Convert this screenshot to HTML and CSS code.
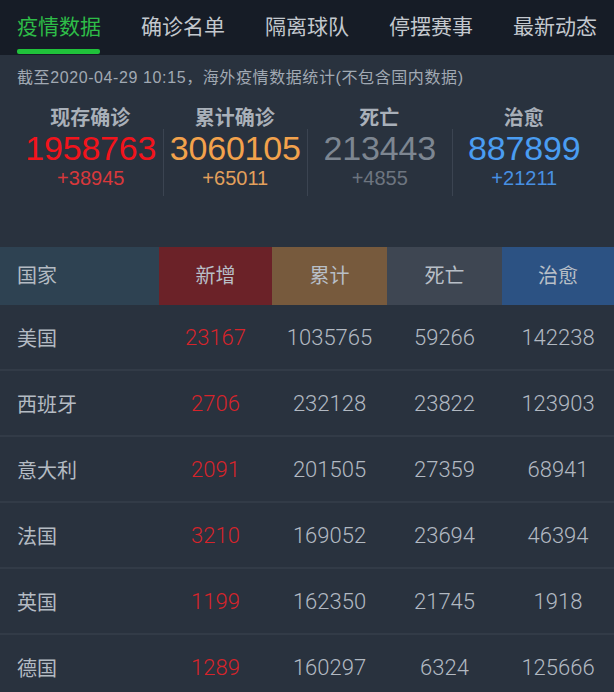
FILE: index.html
```html
<!DOCTYPE html>
<html lang="zh-CN">
<head>
<meta charset="utf-8">
<title>疫情数据</title>
<link rel="stylesheet" href="styles.css">
</head>
<body>
<div class="page">
  <nav class="tabs">
    <div class="tab active">疫情数据</div>
    <div class="tab">确诊名单</div>
    <div class="tab">隔离球队</div>
    <div class="tab">停摆赛事</div>
    <div class="tab">最新动态</div>
  </nav>
  <main class="content">
    <p class="note">截至2020-04-29 10:15，海外疫情数据统计(不包含国内数据)</p>
    <section class="stats">
      <div class="stat">
        <div class="label">现存确诊</div>
        <div class="body first">
          <div class="big red">1958763</div>
          <div class="sub red-sub">+38945</div>
        </div>
      </div>
      <div class="stat">
        <div class="label">累计确诊</div>
        <div class="body">
          <div class="big orange">3060105</div>
          <div class="sub orange-sub">+65011</div>
        </div>
      </div>
      <div class="stat">
        <div class="label">死亡</div>
        <div class="body">
          <div class="big gray">213443</div>
          <div class="sub gray-sub">+4855</div>
        </div>
      </div>
      <div class="stat">
        <div class="label">治愈</div>
        <div class="body">
          <div class="big blue">887899</div>
          <div class="sub blue-sub">+21211</div>
        </div>
      </div>
    </section>
    <section class="table">
      <div class="row head">
        <div class="cell name h-country">国家</div>
        <div class="cell h-new">新增</div>
        <div class="cell h-total">累计</div>
        <div class="cell h-dead">死亡</div>
        <div class="cell h-cured">治愈</div>
      </div>
      <div class="row">
        <div class="cell name">美国</div>
        <div class="cell num new">23167</div>
        <div class="cell num">1035765</div>
        <div class="cell num">59266</div>
        <div class="cell num">142238</div>
      </div>
      <div class="row">
        <div class="cell name">西班牙</div>
        <div class="cell num new">2706</div>
        <div class="cell num">232128</div>
        <div class="cell num">23822</div>
        <div class="cell num">123903</div>
      </div>
      <div class="row">
        <div class="cell name">意大利</div>
        <div class="cell num new">2091</div>
        <div class="cell num">201505</div>
        <div class="cell num">27359</div>
        <div class="cell num">68941</div>
      </div>
      <div class="row">
        <div class="cell name">法国</div>
        <div class="cell num new">3210</div>
        <div class="cell num">169052</div>
        <div class="cell num">23694</div>
        <div class="cell num">46394</div>
      </div>
      <div class="row">
        <div class="cell name">英国</div>
        <div class="cell num new">1199</div>
        <div class="cell num">162350</div>
        <div class="cell num">21745</div>
        <div class="cell num">1918</div>
      </div>
      <div class="row">
        <div class="cell name">德国</div>
        <div class="cell num new">1289</div>
        <div class="cell num">160297</div>
        <div class="cell num">6324</div>
        <div class="cell num">125666</div>
      </div>
    </section>
  </main>
</div>
</body>
</html>
```

FILE: styles.css
```css
* { box-sizing: border-box; }
html, body {
  margin: 0;
  padding: 0;
  background: #29323e;
}
body {
  font-family: "Noto Sans CJK SC", "Liberation Sans", sans-serif;
  color: #b4bbc4;
  overflow: hidden;
}
.page {
  width: 614px;
  height: 692px;
  overflow: hidden;
}

/* tabs */
.tabs {
  height: 55px;
  background: #161c26;
  display: flex;
  gap: 40px;
  padding-left: 17px;
}
.tab {
  position: relative;
  width: 84px;
  font-size: 21px;
  line-height: 50px;
  color: #c3c8ce;
  white-space: nowrap;
}
.tab.active {
  color: #2ebd48;
}
.tab.active::after {
  content: "";
  position: absolute;
  left: 0;
  right: 1px;
  top: 49px;
  height: 5px;
  border-radius: 2px;
  background: #20c23b;
}

/* note */
.note {
  margin: 11px 0 0 17px;
  font-family: "Liberation Sans", "Noto Sans CJK SC", sans-serif;
  font-size: 16px;
  line-height: 24px;
  letter-spacing: 0.6px;
  color: #a1a9b3;
}

/* stats */
.stats {
  display: grid;
  grid-template-columns: repeat(4, 1fr);
  padding: 0 18px;
  margin-top: 15px;
}
.stat {
  display: flex;
  flex-direction: column;
  align-items: stretch;
  text-align: center;
}
.label {
  font-size: 20px;
  font-weight: 700;
  line-height: 24px;
  color: #a9b0b9;
}
.body {
  border-left: 1px solid #3b4451;
  padding-bottom: 7px;
}
.body.first {
  border-left-color: transparent;
}
.big {
  font-family: "Liberation Sans", Arial, sans-serif;
  font-size: 34px;
  line-height: 38px;
  letter-spacing: -0.2px;
}
.sub {
  font-family: "Liberation Sans", Arial, sans-serif;
  font-size: 20px;
  line-height: 22px;
}
.red { color: #f2141c; }
.red-sub { color: #d8383b; }
.orange { color: #f3a24c; }
.orange-sub { color: #e3a05c; }
.gray { color: #7d8691; }
.gray-sub { color: #6d7580; }
.blue { color: #4a9df2; }
.blue-sub { color: #4890e2; }

/* table */
.table {
  margin-top: 51px;
}
.row {
  display: grid;
  grid-template-columns: 159px 113px 115px 115px 112px;
  height: 66px;
  border-bottom: 2px solid #323b47;
  align-items: center;
}
.row.head {
  height: 58px;
  border-bottom: none;
  align-items: stretch;
}
.cell {
  text-align: center;
  font-size: 20px;
}
.head .cell {
  display: flex;
  align-items: center;
  justify-content: center;
  padding-bottom: 3px;
  color: #b8bfc7;
}
.cell.name {
  text-align: left;
  padding-left: 17px;
  color: #b4bbc3;
}
.head .cell.name {
  justify-content: flex-start;
}
.h-country { background: #2e4252; }
.h-new { background: #6b2228; }
.h-total { background: #775a3d; }
.h-dead { background: #3e4652; }
.h-cured { background: #2c5283; }
.num {
  font-family: Roboto, "Liberation Sans", sans-serif;
  font-weight: 300;
  font-size: 22px;
  color: #b2b9c2;
}
.num.new {
  color: #d6242b;
}
```
